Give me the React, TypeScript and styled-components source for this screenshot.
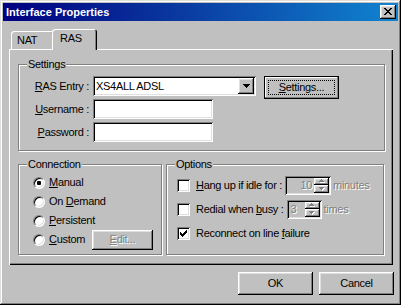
import * as React from "react";
import styled, { createGlobalStyle } from "styled-components";

const GlobalStyle = createGlobalStyle`
  html, body {
    margin: 0;
    padding: 0;
    background: #c0c0c0;
  }
  body {
    font-family: "Liberation Sans", Arial, sans-serif;
    font-size: 11px;
    letter-spacing: -0.3px;
    color: #000;
  }
  * {
    box-sizing: border-box;
  }
  u {
    text-underline-offset: 1px;
  }
`;

// classic 3d edges
const raised = `
  box-shadow: inset -1px -1px #000, inset 1px 1px #fff,
    inset -2px -2px #808080, inset 2px 2px #dfdfdf;
`;
const sunken = `
  box-shadow: inset 1px 1px #808080, inset -1px -1px #fff,
    inset 2px 2px #000, inset -2px -2px #dfdfdf;
`;
const disabledText = `
  color: #808080;
  text-shadow: 1px 1px #fff;
`;

const Window = styled.div`
  width: 401px;
  height: 305px;
  display: flex;
  flex-direction: column;
  padding: 3px;
  background: #c0c0c0;
  box-shadow: inset -1px -1px #000, inset 1px 1px #dfdfdf,
    inset -2px -2px #808080, inset 2px 2px #fff;
`;

const TitleBar = styled.div`
  height: 18px;
  display: flex;
  align-items: center;
  justify-content: space-between;
  padding: 0 2px 0 3px;
  background: linear-gradient(90deg, #000080 0%, #0a3aa0 45%, #1084d0 100%);
`;

const Title = styled.span`
  color: #fff;
  font-weight: bold;
  font-size: 11px;
  letter-spacing: 0;
  line-height: 13px;
`;

const CloseButton = styled.div`
  width: 16px;
  height: 14px;
  display: flex;
  align-items: center;
  justify-content: center;
  padding: 0 1px 1px 0;
  background: #c0c0c0;
  ${raised}
`;

const Body = styled.div`
  flex: 1;
  display: flex;
  flex-direction: column;
  padding: 8px 5px 0 6px;
`;

const TabStrip = styled.div`
  height: 20px;
  display: flex;
  align-items: flex-end;
  padding-left: 2px;
  position: relative;
  z-index: 1;
`;

const Tab = styled.div<{ $active?: boolean; $width: number }>`
  width: ${(p) => p.$width}px;
  height: ${(p) => (p.$active ? 21 : 18)}px;
  margin: 0 0 ${(p) => (p.$active ? -1 : 0)}px ${(p) => (p.$active ? -2 : 0)}px;
  padding: 3px 0 0 ${(p) => (p.$active ? 8 : 6)}px;
  line-height: 13px;
  background: #c0c0c0;
  border-radius: 3px 3px 0 0;
  box-shadow: inset 1px 1px #fff, inset -1px 0 #000, inset -2px 0 #808080;
`;

const TabPanel = styled.div`
  height: 216px;
  display: flex;
  flex-direction: column;
  padding: 15px 8px 0 9px;
  background: #c0c0c0;
  box-shadow: inset 1px 1px #fff, inset -1px -1px #000, inset -2px -2px #808080;
`;

const GroupBox = styled.div<{ $width?: number; $height: number }>`
  position: relative;
  width: ${(p) => (p.$width ? `${p.$width}px` : "auto")};
  height: ${(p) => p.$height}px;
  border: 1px solid #808080;
  box-shadow: inset 1px 1px #fff, 1px 1px #fff;
`;

const Legend = styled.span`
  position: absolute;
  top: -7px;
  left: 8px;
  padding: 0 1px;
  line-height: 13px;
  background: #c0c0c0;
`;

const SettingsGrid = styled.div`
  display: flex;
  flex-direction: column;
  gap: 3px;
  padding-top: 11px;
`;

const FieldRow = styled.div`
  height: 20px;
  display: flex;
  align-items: center;
`;

const FieldLabel = styled.label`
  width: 70px;
  margin-right: 4px;
  text-align: right;
  line-height: 13px;
`;

const Combo = styled.div`
  width: 163px;
  height: 20px;
  display: flex;
  align-items: center;
  padding: 2px;
  background: #fff;
  ${sunken}
`;

const ComboText = styled.span`
  flex: 1;
  padding-left: 1px;
  line-height: 13px;
`;

const ArrowButton = styled.div`
  width: 16px;
  height: 16px;
  display: flex;
  align-items: center;
  justify-content: center;
  background: #c0c0c0;
  ${raised}
`;

const TextInput = styled.div`
  width: 120px;
  height: 20px;
  background: #fff;
  ${sunken}
`;

const PushButton = styled.div<{ $width?: number; $height?: number; $disabled?: boolean }>`
  width: ${(p) => p.$width ?? 75}px;
  height: ${(p) => p.$height ?? 23}px;
  display: flex;
  align-items: center;
  justify-content: center;
  line-height: 13px;
  background: #c0c0c0;
  ${raised}
  ${(p) => (p.$disabled ? disabledText : "")}
`;

const EditButton = styled(PushButton)`
  margin-left: 7px;
`;

const DefaultButton = styled.div`
  width: 75px;
  height: 23px;
  margin-left: 8px;
  align-self: flex-start;
  padding: 1px;
  border: 1px solid #000;
  background: #c0c0c0;
  box-shadow: inset -1px -1px #808080, inset 1px 1px #fff;
  display: flex;
`;

const FocusRect = styled.div`
  flex: 1;
  margin: 2px;
  display: flex;
  align-items: center;
  justify-content: center;
  line-height: 13px;
  border: 1px dotted #000;
`;

const GroupRow = styled.div`
  display: flex;
  gap: 4px;
  margin-top: 13px;
`;

const RadioList = styled.div`
  display: flex;
  flex-direction: column;
  padding: 8px 0 0 14px;
`;

const RadioRow = styled.div`
  height: 19px;
  display: flex;
  align-items: center;
  line-height: 13px;
`;

const Radio = styled.span<{ $checked?: boolean }>`
  position: relative;
  width: 12px;
  height: 12px;
  margin-right: 4px;
  border-radius: 50%;
  background: #fff;
  border: 1px solid;
  border-color: #808080 #fff #fff #808080;
  box-shadow: inset 1px 1px #000, inset -1px -1px #dfdfdf;

  &::after {
    content: "";
    display: ${(p) => (p.$checked ? "block" : "none")};
    position: absolute;
    left: 3px;
    top: 3px;
    width: 4px;
    height: 4px;
    border-radius: 1px;
    background: #000;
  }
`;

const OptionList = styled.div`
  display: flex;
  flex-direction: column;
  gap: 4px;
  padding: 10px 0 0 10px;
`;

const OptionRow = styled.div`
  height: 20px;
  display: flex;
  align-items: center;
  line-height: 13px;
`;

const CheckBox = styled.span`
  width: 13px;
  height: 13px;
  margin-right: 6px;
  display: flex;
  align-items: center;
  justify-content: center;
  background: #fff;
  ${sunken}
`;

const Spin = styled.div<{ $width: number }>`
  width: ${(p) => p.$width}px;
  height: 19px;
  margin: 0 2px 0 3px;
  display: flex;
  padding: 2px;
  background: #c0c0c0;
  ${sunken}
`;

const SpinValue = styled.span<{ $align: "left" | "right" }>`
  flex: 1;
  padding: 0 2px;
  text-align: ${(p) => p.$align};
  line-height: 15px;
  ${disabledText}
`;

const SpinButtons = styled.div`
  width: 15px;
  display: flex;
  flex-direction: column;
`;

const SpinHalf = styled.div`
  flex: 1;
  display: flex;
  align-items: center;
  justify-content: center;
  background: #c0c0c0;
  ${raised}
`;

const Dim = styled.span`
  ${disabledText}
`;

const ButtonRow = styled.div`
  display: flex;
  justify-content: flex-end;
  gap: 6px;
  margin: 7px -1px 0 0;
`;

const CloseGlyph = () => (
  <svg width="8" height="7" viewBox="0 0 8 7" shapeRendering="crispEdges">
    <path
      d="M0 0h2v1H0zM6 0h2v1H6zM1 1h2v1H1zM5 1h2v1H5zM2 2h4v1H2zM3 3h2v1H3zM2 4h4v1H2zM1 5h2v1H1zM5 5h2v1H5zM0 6h2v1H0zM6 6h2v1H6z"
      fill="#000"
    />
  </svg>
);

const DownArrow = () => (
  <svg width="7" height="4" viewBox="0 0 7 4" shapeRendering="crispEdges">
    <path d="M0 0h7v1H0zM1 1h5v1H1zM2 2h3v1H2zM3 3h1v1H3z" fill="#000" />
  </svg>
);

const CheckMark = () => (
  <svg width="7" height="7" viewBox="0 0 7 7" shapeRendering="crispEdges">
    <path
      d="M6 0h1v1H6zM5 1h2v1H5zM0 2h1v1H0zM4 2h3v1H4zM0 3h2v1H0zM3 3h3v1H3zM0 4h5v1H0zM1 5h3v1H1zM2 6h1v1H2z"
      fill="#000"
    />
  </svg>
);

const SpinArrow = ({ up }: { up?: boolean }) => (
  <svg width="6" height="4" viewBox="0 0 6 4" shapeRendering="crispEdges">
    <path
      d={up ? "M3 1h1v1H3zM2 2h3v1H2zM1 3h5v1H1z" : "M1 1h5v1H1zM2 2h3v1H2zM3 3h1v1H3z"}
      fill="#fff"
    />
    <path
      d={up ? "M2 0h1v1H2zM1 1h3v1H1zM0 2h5v1H0z" : "M0 0h5v1H0zM1 1h3v1H1zM2 2h1v1H2z"}
      fill="#808080"
    />
  </svg>
);

const SpinBox = ({ value, width, align }: { value: string; width: number; align: "left" | "right" }) => (
  <Spin $width={width}>
    <SpinValue $align={align}>{value}</SpinValue>
    <SpinButtons>
      <SpinHalf>
        <SpinArrow up />
      </SpinHalf>
      <SpinHalf>
        <SpinArrow />
      </SpinHalf>
    </SpinButtons>
  </Spin>
);

export default function App() {
  return (
    <>
      <GlobalStyle />
      <Window>
        <TitleBar>
          <Title>Interface Properties</Title>
          <CloseButton>
            <CloseGlyph />
          </CloseButton>
        </TitleBar>
        <Body>
          <TabStrip>
            <Tab $width={43}>NAT</Tab>
            <Tab $active $width={45}>RAS</Tab>
          </TabStrip>
          <TabPanel>
            <GroupBox $height={87}>
              <Legend>Settings</Legend>
              <SettingsGrid>
                <FieldRow>
                  <FieldLabel>
                    <u>R</u>AS Entry :
                  </FieldLabel>
                  <Combo>
                    <ComboText>XS4ALL ADSL</ComboText>
                    <ArrowButton>
                      <DownArrow />
                    </ArrowButton>
                  </Combo>
                  <DefaultButton>
                    <FocusRect>
                      <span>
                        <u>S</u>ettings...
                      </span>
                    </FocusRect>
                  </DefaultButton>
                </FieldRow>
                <FieldRow>
                  <FieldLabel>
                    <u>U</u>sername :
                  </FieldLabel>
                  <TextInput />
                </FieldRow>
                <FieldRow>
                  <FieldLabel>
                    <u>P</u>assword :
                  </FieldLabel>
                  <TextInput />
                </FieldRow>
              </SettingsGrid>
            </GroupBox>
            <GroupRow>
              <GroupBox $width={144} $height={91}>
                <Legend>Connection</Legend>
                <RadioList>
                  <RadioRow>
                    <Radio $checked />
                    <span>
                      <u>M</u>anual
                    </span>
                  </RadioRow>
                  <RadioRow>
                    <Radio />
                    <span>
                      On <u>D</u>emand
                    </span>
                  </RadioRow>
                  <RadioRow>
                    <Radio />
                    <span>
                      <u>P</u>ersistent
                    </span>
                  </RadioRow>
                  <RadioRow>
                    <Radio />
                    <span>
                      <u>C</u>ustom
                    </span>
                    <EditButton $width={61} $height={20} $disabled>
                      <span>
                        <u>E</u>dit...
                      </span>
                    </EditButton>
                  </RadioRow>
                </RadioList>
              </GroupBox>
              <GroupBox $width={218} $height={91}>
                <Legend>Options</Legend>
                <OptionList>
                  <OptionRow>
                    <CheckBox />
                    <span>
                      <u>H</u>ang up if idle for :
                    </span>
                    <SpinBox value="10" width={46} align="right" />
                    <Dim>minutes</Dim>
                  </OptionRow>
                  <OptionRow>
                    <CheckBox />
                    <span>
                      Redial when <u>b</u>usy :
                    </span>
                    <SpinBox value="3" width={35} align="left" />
                    <Dim>times</Dim>
                  </OptionRow>
                  <OptionRow>
                    <CheckBox>
                      <CheckMark />
                    </CheckBox>
                    <span>
                      Reconnect on line <u>f</u>ailure
                    </span>
                  </OptionRow>
                </OptionList>
              </GroupBox>
            </GroupRow>
          </TabPanel>
          <ButtonRow>
            <PushButton>OK</PushButton>
            <PushButton>Cancel</PushButton>
          </ButtonRow>
        </Body>
      </Window>
    </>
  );
}
